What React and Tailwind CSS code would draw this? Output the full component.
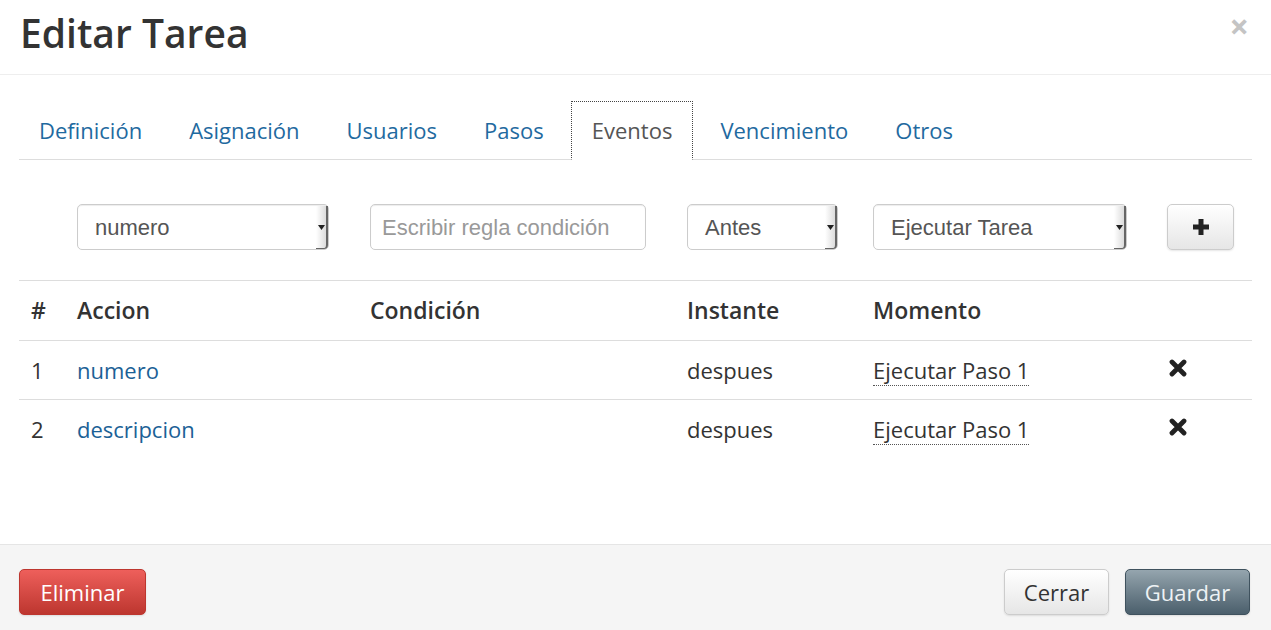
import React from 'react';

const tabs = ['Definición', 'Asignación', 'Usuarios', 'Pasos', 'Eventos', 'Vencimiento', 'Otros'];

const rows = [
  { id: 1, accion: 'numero', instante: 'despues', momento: 'Ejecutar Paso 1' },
  { id: 2, accion: 'descripcion', instante: 'despues', momento: 'Ejecutar Paso 1' },
];

const cols = 'grid grid-cols-[46px_293px_317px_186px_294px_96px]';

function FakeSelect({ value, width }) {
  return (
    <div
      className={`relative h-[46px] ${width} rounded-[5px] border border-[#ccc] bg-white shadow-[inset_0_1px_1px_rgba(0,0,0,0.075)] flex items-center pl-[17px] font-['Liberation_Sans',Arial,sans-serif] text-[22px] text-[#555]`}
    >
      {value}
      <span className="absolute right-0 top-[1px] bottom-0 w-[12px] rounded-br-[4px] border-r-2 border-b border-[#666] bg-gradient-to-r from-white to-[#dcdcdc] flex items-center justify-center">
        <svg width="7" height="5" viewBox="0 0 7 5">
          <path d="M0 0h7L3.5 5z" fill="#222" />
        </svg>
      </span>
    </div>
  );
}

function HeavyX() {
  return (
    <svg width="18" height="18" viewBox="0 0 18 18">
      <path d="M3 3l12 12M15 3L3 15" stroke="#222" strokeWidth="4.8" strokeLinecap="round" />
    </svg>
  );
}

export default function App() {
  return (
    <div className="w-[1271px] h-[630px] overflow-hidden bg-white flex flex-col font-['Open_Sans',sans-serif] text-[#333]">
      {/* header */}
      <div className="h-[75px] shrink-0 border-b border-[#eee] flex items-center justify-between pl-[20px] pr-[22px]">
        <h3 className="text-[39px] font-semibold leading-none text-[#333] -mt-[10px]">Editar Tarea</h3>
        <span className="text-[34px] font-bold leading-none text-[#c4c4c4] -mt-[22px]">×</span>
      </div>

      {/* body */}
      <div className="flex-1 px-[19px] pt-[26px]">
        <ul className="flex gap-[7px] border-b border-[#ddd] h-[59px]">
          {tabs.map((t) => (
            <li
              key={t}
              className={
                t === 'Eventos'
                  ? "h-[59px] -mb-px px-[20px] flex items-center bg-white border border-dotted border-[#444] border-b-white text-[#555] text-[22px]"
                  : "h-[58px] px-[20px] flex items-center text-[#1f6aa0] text-[22px]"
              }
            >
              {t}
            </li>
          ))}
        </ul>

        {/* form row */}
        <div className={`${cols} items-center pt-[44px] pb-[30px]`}>
          <div />
          <div className="pl-[12px]">
            <FakeSelect value="numero" width="w-[252px]" />
          </div>
          <div className="pl-[12px]">
            <div className="h-[46px] w-[276px] rounded-[5px] border border-[#ccc] bg-white shadow-[inset_0_1px_1px_rgba(0,0,0,0.075)] flex items-center pl-[11px] font-['Liberation_Sans',Arial,sans-serif] text-[22px] text-[#999]">
              Escribir regla condición
            </div>
          </div>
          <div className="pl-[12px]">
            <FakeSelect value="Antes" width="w-[151px]" />
          </div>
          <div className="pl-[12px]">
            <FakeSelect value="Ejecutar Tarea" width="w-[254px]" />
          </div>
          <div className="pl-[12px]">
            <button className="h-[46px] w-[67px] rounded-[5px] border border-[#ccc] bg-gradient-to-b from-white to-[#e6e6e6] shadow-[0_1px_2px_rgba(0,0,0,0.1)] flex items-center justify-center">
              <svg width="20" height="20" viewBox="0 0 20 20">
                <path d="M10 2v16M2 10h16" stroke="#222" strokeWidth="5" />
              </svg>
            </button>
          </div>
        </div>

        {/* table */}
        <div className="border-t border-[#ddd]">
          <div className={`${cols} h-[59px] items-center font-semibold text-[23px] text-[#333]`}>
            <div className="pl-[12px]">#</div>
            <div className="pl-[12px]">Accion</div>
            <div className="pl-[12px]">Condición</div>
            <div className="pl-[12px]">Instante</div>
            <div className="pl-[12px]">Momento</div>
            <div />
          </div>
          {rows.map((r) => (
            <div key={r.id} className={`${cols} h-[59px] items-center border-t border-[#ddd] text-[22px]`}>
              <div className="pl-[12px]">{r.id}</div>
              <div className="pl-[12px] text-[#1b6196]">{r.accion}</div>
              <div />
              <div className="pl-[12px]">{r.instante}</div>
              <div className="pl-[12px]">
                <span className="border-b border-dotted border-[#555]">{r.momento}</span>
              </div>
              <div className="pl-[14px] flex items-center -mt-[5px]">
                <HeavyX />
              </div>
            </div>
          ))}
        </div>
      </div>

      {/* footer */}
      <div className="h-[86px] shrink-0 border-t border-[#e5e5e5] bg-[#f5f5f5] flex items-start justify-between pl-[19px] pr-[21px] pt-[24px]">
        <button className="h-[46px] w-[127px] rounded-[5px] border border-[#bd362f] bg-gradient-to-b from-[#ee5f5b] to-[#bd362f] text-white text-[22px] shadow-[0_1px_2px_rgba(0,0,0,0.1)]">
          Eliminar
        </button>
        <div className="flex gap-[16px]">
          <button className="h-[46px] w-[105px] rounded-[5px] border border-[#ccc] bg-gradient-to-b from-white to-[#e6e6e6] text-[#333] text-[22px] shadow-[0_1px_2px_rgba(0,0,0,0.1)]">
            Cerrar
          </button>
          <button className="h-[46px] w-[125px] rounded-[5px] border border-[#3f525e] bg-gradient-to-b from-[#95a5ae] to-[#4b5f6c] text-[#eef2f4] text-[22px] shadow-[0_1px_2px_rgba(0,0,0,0.1)]">
            Guardar
          </button>
        </div>
      </div>
    </div>
  );
}
